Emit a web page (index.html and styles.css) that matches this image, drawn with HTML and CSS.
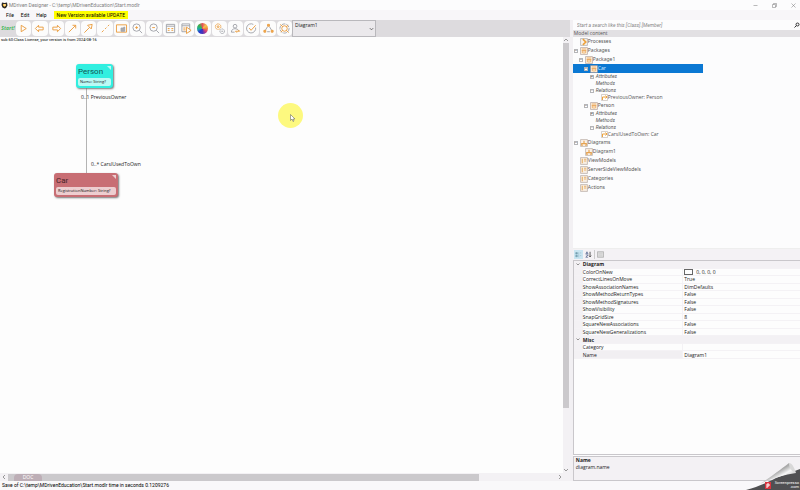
FILE: index.html
```html
<!DOCTYPE html>
<html lang="en">
<head>
<meta charset="utf-8">
<title>MDriven Designer</title>
<link rel="stylesheet" href="styles.css">
</head>
<body>
<svg class="defs" aria-hidden="true">
  <symbol id="class" viewBox="0 0 14 14"><path d="M1 1h12v12H1z" fill="#fff8ed" stroke="#a08a84"/><path d="M3 3.500h8M3 6h8M7 6v6M4 6v5M10 6v5" stroke="#e9a050" stroke-width="1.500" fill="none"/></symbol>
  <symbol id="process" viewBox="0 0 14 14"><path d="M1 1h12v12H1z" fill="#f7f3ef" stroke="#999"/><path d="M5 2l5 5-5 5" stroke="#eda23d" stroke-width="3" fill="none"/></symbol>
  <symbol id="relation" viewBox="0 0 14 14"><path d="M1 1h12v12H1z" fill="#fff" stroke="#b1a49c"/><path d="M3 12V6h8M9 3l3 3-3 3" stroke="#eda23d" stroke-width="2" fill="none"/></symbol>
  <symbol id="diagram" viewBox="0 0 14 14"><path d="M1 1h12v12H1z" fill="#faf2ea" stroke="#a99a92"/><path d="M7 3v5M3 12V8h8v4M2 11h3M9 11h3" stroke="#e5a250" stroke-width="2" fill="none"/></symbol>
  <symbol id="list" viewBox="0 0 14 14"><path d="M1 1h12v12H1z" fill="#f8eee2" stroke="#a59993"/><path d="M4 3v8M7 4h4M7 7h4" stroke="#e8b26c" stroke-width="2" fill="none"/></symbol>
</svg>

<header class="titlebar">
  <svg class="logo" viewBox="0 0 14 14"><path d="M2 1l5 1 5-1 1 6-3 5-3 1-4-2-2-5z" fill="#2d2926"/><path d="M4 4h6v3l-3 3-3-3z" fill="#f0b434"/><path d="M6 5h3v2H6z" fill="#fff"/></svg>
  <span class="title">MDriven Designer - C:\temp\MDrivenEducation\Start.modlr</span>
  <div class="window-buttons">
    <button aria-label="Minimize"><svg viewBox="0 0 10 10"><path d="M1 5h8"/></svg></button>
    <button aria-label="Restore"><svg viewBox="0 0 10 10"><path d="M1 3h6v6H1zM3 3V1h6v6H7"/></svg></button>
    <button aria-label="Close"><svg viewBox="0 0 10 10"><path d="M1 1l8 8M9 1L1 9"/></svg></button>
  </div>
</header>

<nav class="menu">
  <button>File</button><button>Edit</button><button>Help</button><button class="update">New Version available UPDATE</button>
</nav>

<div class="workspace">
  <main class="editor">
    <div class="toolbar">
      <button class="start">Start!</button>
      <div class="tools">
        <button aria-label="Run"><svg viewBox="0 0 24 24"><path d="M7 5l11 7-11 7z"/></svg></button>
        <button aria-label="Back"><svg viewBox="0 0 24 24"><path d="M3 12l7-7v4h10v6H10v4z"/></svg></button>
        <button aria-label="Forward"><svg viewBox="0 0 24 24"><path d="M21 12l-7-7v4H4v6h10v4z"/></svg></button>
        <button aria-label="Association"><svg viewBox="0 0 24 24"><path d="M4 20L19 5M12 5h7v7"/></svg></button>
        <button aria-label="Generalization"><svg viewBox="0 0 24 24"><path d="M3 21L15 9M10 5l10-2-2 10z"/></svg></button>
        <button aria-label="Association class"><svg viewBox="0 0 24 24"><path d="M4 20l4-4M11 13l3-3M17 7l3-3"/></svg></button>
        <button aria-label="Capture"><svg viewBox="0 0 24 24"><path d="M1 4h22v16H1z"/><path class="gray fill" d="M11 11h6v-2h2v9h-8z"/></svg></button>
        <button aria-label="Zoom in"><svg viewBox="0 0 24 24"><circle class="gray" cx="10" cy="10" r="8"/><path class="gray" d="M16 16l6 6"/><path d="M7 10h6M10 7v6"/></svg></button>
        <button aria-label="Zoom out"><svg viewBox="0 0 24 24"><circle class="gray" cx="10" cy="10" r="8"/><path class="gray" d="M16 16l6 6"/><path d="M7 10h6"/></svg></button>
        <button aria-label="Form"><svg viewBox="0 0 24 24"><path class="gray" d="M3 3h18v18H3zM3 7h18"/><path d="M6 12h4M14 12h4M6 16h4M14 16h4"/></svg></button>
        <button aria-label="Run form"><svg viewBox="0 0 24 24"><path class="gray" d="M2 2h17v17H2zM2 6h17"/><path d="M5 11h5M5 15h5"/><path class="play" d="M12 9l10 7-10 7z"/></svg></button>
        <button aria-label="Colors"><i class="wheel"></i></button>
        <button aria-label="Settings"><svg viewBox="0 0 24 24"><circle cx="9" cy="8" r="6" stroke-dasharray="3 1"/><circle cx="9" cy="8" r="2"/><circle class="gray" cx="18" cy="18" r="5" stroke-dasharray="3 1"/><path class="gray" d="M16 18h4"/></svg></button>
        <button aria-label="User"><svg viewBox="0 0 24 24"><circle class="gray" cx="11" cy="7" r="4"/><path class="gray" d="M3 20c0-10 14-9 16-3M3 20h7"/><path d="M12 18h9l-3-3M12 18l3 3"/></svg></button>
        <button aria-label="Validate"><svg viewBox="0 0 24 24"><path class="gray" d="M21 10a10 10 0 1 1-5-7"/><path d="M7 11l4 5L21 5"/></svg></button>
        <button aria-label="Hierarchy"><svg viewBox="0 0 24 24"><path class="gray" d="M10 8l-5 8M14 8l5 8M9 19h6"/><path class="solid" d="M10 3h4v4h-4zM2 16h4v4H2zM18 16h4v4h-4z"/></svg></button>
        <button aria-label="Refresh"><svg viewBox="0 0 24 24"><circle class="gray" cx="12" cy="12" r="10" stroke-dasharray="8 2"/><circle cx="12" cy="12" r="6"/><path d="M3 3l5 5M16 16l5 5M20 5l-4 3M4 20l4-4"/></svg></button>
      </div>
      <div class="picker">
        <select aria-label="Diagram"><option>Diagram1</option></select>
        <svg viewBox="0 0 6 4"><path d="M1 1l2 2 2-2"/></svg>
      </div>
    </div>

    <div class="canvas-row">
      <section class="canvas">
        <p class="license">sub 60:Class License, your version is from 2024-08-16</p>
        <i class="link"></i>
        <article class="node person"><h2>Person</h2><p>Name: String?</p></article>
        <span class="end owner">0..1 PreviousOwner</span>
        <span class="end cars">0..* CarsIUsedToOwn</span>
        <article class="node car"><h2>Car</h2><p>RegistrationNumber: String?</p></article>
        <i class="spot"></i>
        <svg class="cursor" viewBox="0 0 10 16"><path d="M1 1v12l3-3 2 5 2-1-2-4h4z" fill="#fff" stroke="#555"/></svg>
      </section>
      <div class="vscroll">
        <svg viewBox="0 0 6 6"><path d="M1 4l2-2 2 2"/></svg><i></i><svg viewBox="0 0 6 6"><path d="M1 2l2 2 2-2"/></svg>
      </div>
    </div>
    <div class="hscroll">
      <svg viewBox="0 0 6 6"><path d="M4 1L2 3l2 2"/></svg>
      <div class="track"><i></i><button class="doc">DOC</button></div>
      <svg viewBox="0 0 6 6"><path d="M2 1l2 2-2 2"/></svg>
    </div>
  </main>

  <aside class="side">
    <div class="search">
      <input type="text" aria-label="Search model" placeholder="Start a search like this [Class].[Member]">
      <svg viewBox="0 0 12 12"><circle cx="7" cy="5" r="3"/><path d="M5 7l-4 4"/></svg>
    </div>
    <h3 class="side-head">Model content</h3>
    <ul class="tree">
      <li><b></b><svg><use href="#process"/></svg>Processes</li>
      <li><b class="box">−</b><svg><use href="#class"/></svg>Packages</li>
      <li class="l1"><b class="box">−</b><svg><use href="#class"/></svg>Package1</li>
      <li class="l2 selected"><b class="box">−</b><svg><use href="#class"/></svg>Car</li>
      <li class="l3 small"><b class="box">+</b>Attributes</li>
      <li class="l3 small"><b></b>Methods</li>
      <li class="l3 small"><b class="box">−</b>Relations</li>
      <li class="l4 small"><b></b><svg><use href="#relation"/></svg>PreviousOwner: Person</li>
      <li class="l2"><b class="box">−</b><svg><use href="#class"/></svg>Person</li>
      <li class="l3 small"><b class="box">+</b>Attributes</li>
      <li class="l3 small"><b></b>Methods</li>
      <li class="l3 small"><b class="box">−</b>Relations</li>
      <li class="l4 small"><b></b><svg><use href="#relation"/></svg>CarsIUsedToOwn: Car</li>
      <li><b class="box">−</b><svg><use href="#diagram"/></svg>Diagrams</li>
      <li class="l1"><b></b><svg><use href="#diagram"/></svg>Diagram1</li>
      <li><b></b><svg><use href="#list"/></svg>ViewModels</li>
      <li><b></b><svg><use href="#list"/></svg>ServerSideViewModels</li>
      <li><b></b><svg><use href="#list"/></svg>Categories</li>
      <li><b></b><svg><use href="#list"/></svg>Actions</li>
    </ul>
    <div class="prop-tools">
      <button class="on" aria-label="Categorized"><svg viewBox="0 0 18 18"><path d="M2 4h4v4H2zM2 11h4v4H2z" fill="#7fa7b8" stroke="#58899d"/><path d="M8 5h3M8 8h3M8 12h3M8 15h3M13 5h3M13 12h3" stroke="#6795a9"/></svg></button>
      <button aria-label="Alphabetical"><svg viewBox="0 0 18 18"><path d="M2 8l3-6 3 6M3 6h4M2 10h6l-6 6h6" stroke="#5b6c94" stroke-width="2" fill="none"/><path d="M13 2v13M10 12l3 3 3-3" stroke="#333" stroke-width="2" fill="none"/></svg></button>
      <button class="pages" aria-label="Property pages"><svg viewBox="0 0 18 18"><path d="M1 2h16v14H1z" fill="#ddd" stroke="#aaa" stroke-width="2"/><path d="M4 7h10M4 11h10" stroke="#bbb"/></svg></button>
    </div>
    <div class="prop-grid">
      <table>
        <colgroup><col class="c-mark"><col class="c-name"><col></colgroup>
        <tbody>
        <tr class="group"><td><svg viewBox="0 0 8 6"><path d="M1 1l3 3 3-3"/></svg></td><th colspan="2">Diagram</th></tr>
        <tr><td></td><th>ColorOnNew</th><td><span class="swatch"></span>0, 0, 0, 0</td></tr>
        <tr><td></td><th>CorrectLinesOnMove</th><td>True</td></tr>
        <tr><td></td><th>ShowAssociationNames</th><td>DimDefaults</td></tr>
        <tr><td></td><th>ShowMethodReturnTypes</th><td>False</td></tr>
        <tr><td></td><th>ShowMethodSignatures</th><td>False</td></tr>
        <tr><td></td><th>ShowVisibility</th><td>False</td></tr>
        <tr><td></td><th>SnapGridSize</th><td>8</td></tr>
        <tr><td></td><th>SquareNewAssociations</th><td>False</td></tr>
        <tr><td></td><th>SquareNewGeneralizations</th><td>False</td></tr>
        <tr class="group"><td><svg viewBox="0 0 8 6"><path d="M1 1l3 3 3-3"/></svg></td><th colspan="2">Misc</th></tr>
        <tr><td></td><th>Category</th><td></td></tr>
        <tr class="current"><td></td><th>Name</th><td>Diagram1</td></tr>
        </tbody>
      </table>
    </div>
    <div class="prop-help"><strong>Name</strong><span>diagram.name</span></div>
  </aside>
</div>

<footer class="status">Save of C:\temp\MDrivenEducation\Start.modlr time in seconds 0.1209276</footer>
<div class="curl">
  <svg viewBox="0 0 54 30">
    <defs><linearGradient id="fold" x1="0" y1="0" x2="1" y2="1"><stop offset="0" stop-color="#999"/><stop offset=".45" stop-color="#aaa"/><stop offset=".6" stop-color="#f6f6f6"/><stop offset="1" stop-color="#888"/></linearGradient></defs>
    <path d="M0 30c14-4 22-8 30-12l24-9v21z" fill="#505052"/>
    <path d="M14 24C26 16 34 10 43 3c2 2 4 7 7 10-12 2-24 5-36 11z" fill="url(#fold)"/>
    <path d="M43 3c3 0 5 4 7 10-4-1-7-5-7-10z" fill="#d8d8d8"/>
    <path d="M19 22h6v7h-6z" fill="#d9343f"/><path d="M21 28v-4h2v2h-2" stroke="#fff" fill="none"/>
  </svg>
  <span>Screenpresso<br>.com</span>
</div>
</body>
</html>
```
FILE: styles.css
```css
* { box-sizing: border-box; }
html, body { height: 100%; }
body {
  margin: 0;
  display: flex;
  flex-direction: column;
  position: relative;
  overflow: hidden;
  background: #fcfcfd;
  color: #222;
  font: 5px/7px "Open Sans", "Noto Sans", sans-serif;
}
button, input, select { font: inherit; color: inherit; border: 0; padding: 0; margin: 0; background: none; }
h2, h3, p, ul { margin: 0; padding: 0; font-weight: 400; }
svg { display: block; flex: none; fill: none; }
.defs { position: absolute; width: 0; height: 0; }
.titlebar, .menu, .status, .license, .node h2, .tree .l3, .curl { font-family: Roboto, "Open Sans", sans-serif; }

.titlebar { display: flex; align-items: center; height: 10px; padding: 0 1px; color: #808080; }
.logo { width: 7px; height: 7px; margin-right: 1px; }
.window-buttons { margin-left: auto; display: flex; gap: 13px; padding-right: 2px; }
.window-buttons button { width: 6px; }
.window-buttons svg { width: 5px; height: 5px; stroke: #777; }

.menu { display: flex; align-items: center; gap: 7px; height: 10px; padding-left: 6px; background: #f8f6f9; color: #000; }
.menu button { height: 8px; }
.menu .update { background: #ff0; padding: 0 3px; }

.workspace { flex: 1; min-height: 0; display: flex; gap: 3px; background: #f2f0f3; }
.editor { flex: 1; min-width: 0; display: flex; flex-direction: column; }

.toolbar { display: flex; height: 17px; background: #dddbde; }
.start { width: 16px; color: #46b95a; font-weight: 700; font-style: italic; }
.tools { display: flex; gap: 1px; width: 276px; padding: 1px 0; }
.tools button { flex: 1; display: flex; align-items: center; justify-content: center; background: #fcfcfc; border-radius: 4px; }
.tools svg { width: 11px; height: 11px; stroke: #ea9b3c; stroke-width: 2; overflow: visible; }
.tools .gray { stroke: #a0a2a8; }
.tools .fill { fill: #a9abb0; }
.tools .solid { fill: #f0b064; }
.tools .play { fill: #fcfcfc; }
.wheel { width: 11px; height: 11px; border-radius: 50%; background: conic-gradient(#e8505a, #f3c64f 50deg, #f08d42 90deg, #d44080 130deg, #4935b8 180deg, #2836d2 220deg, #20a7a8 260deg, #36b64a 310deg, #e8505a); }
.picker { position: relative; width: 84px; border: 1px solid #b9b8bc; background: #ebe9ec; }
.picker select { appearance: none; display: block; width: 100%; height: 8px; padding-left: 2px; }
.picker svg { position: absolute; right: 1px; top: 6px; width: 5px; height: 4px; stroke: #555; }

.canvas-row { flex: 1; min-height: 0; display: flex; }
.canvas { flex: 1; position: relative; overflow: hidden; background: #fdfdfd; }
.license { padding-left: 1px; font-size: 4px; line-height: 6px; color: #000; }
.node { position: absolute; padding: 2px; border-radius: 3px; box-shadow: 1px 1px 2px #777; }
.node::after { content: ""; position: absolute; top: 2px; right: 2px; border: 2px solid transparent; border-top-color: #ffffffaa; border-right-color: #ffffffaa; }
.node h2 { font-size: 8px; line-height: 12px; }
.node p { padding: 0 2px; border-radius: 2px; font-size: 4px; line-height: 8px; white-space: nowrap; background: #ffffffaa; color: #111; }
.person { left: 76px; top: 27px; width: 37px; background: #31efe0; color: #145653; }
.car { left: 54px; top: 136px; width: 64px; background: #c86e74; color: #442329; }
.link { position: absolute; left: 86px; top: 50px; width: 1px; height: 88px; background: #b4b4b4; }
.end { position: absolute; white-space: nowrap; }
.owner { left: 81px; top: 57px; }
.cars { left: 91px; top: 124px; }
.spot { position: absolute; left: 278px; top: 66px; width: 25px; height: 25px; border-radius: 50%; background: #fdf97f; }
.cursor { position: absolute; left: 290px; top: 77px; width: 5px; height: 8px; }

.vscroll { width: 7px; display: flex; flex-direction: column; align-items: center; background: #f3f1f4; }
.vscroll i { flex: 0 1 365px; width: 6px; background: #cbc9cc; }
.vscroll svg:last-child { margin-top: auto; }
.vscroll svg, .hscroll svg { width: 6px; height: 6px; stroke: #999; }
.hscroll { height: 8px; display: flex; align-items: center; gap: 1px; padding: 0 7px 0 1px; background: #f3f1f4; }
.track { flex: 1; height: 7px; position: relative; }
.track i { display: block; width: 86%; height: 100%; background: #cbc9cc; }
.doc { position: absolute; left: 6px; top: 0; width: 28px; height: 7px; border-radius: 4px 4px 0 0; background: #bdaeb6; color: #fff; }

.side { width: 28.4%; display: flex; flex-direction: column; background: #fcfcfd; }
.search { display: flex; align-items: center; height: 10px; padding-left: 4px; }
.search input { flex: 1; min-width: 0; height: 8px; font-family: Roboto, sans-serif; font-style: italic; outline: 0; }
.search input::placeholder { color: #888; opacity: 1; }
.search svg { width: 6px; height: 6px; stroke: #333; stroke-width: 2; }
.side-head { padding-left: 1px; font-size: 5px; line-height: 7px; background: #e2e0e3; color: #555; }
.tree { flex: 1; min-height: 0; list-style: none; color: #555; font-family: "Noto Sans", "Open Sans", sans-serif; }
.tree li { display: flex; align-items: center; height: 9px; padding-left: 1px; }
.tree svg { width: 8px; height: 8px; }
.tree b { width: 4px; height: 4px; margin-right: 2px; flex: none; }
.tree .box { border: 1px solid #b5b5b8; font-size: 4px; line-height: 2px; text-align: center; color: #555; background: #fff; }
.tree .l1 { padding-left: 6px; }
.tree .l2 { padding-left: 11px; }
.tree .l3 { padding-left: 17px; font-style: italic; }
.tree .l4 { padding-left: 22px; font-family: "Open Sans", sans-serif; }
.tree .small { height: 7px; }
.tree .small svg { width: 7px; height: 7px; }
.tree .selected { width: 130px; background: #0b78d3; color: #d8ecff; }

.prop-tools { display: flex; align-items: center; gap: 1px; height: 12px; padding: 0 1px; background: #f4f2f5; border-top: 1px solid #eee; }
.prop-tools button { padding: 1px; }
.prop-tools svg { width: 7px; height: 7px; }
.prop-tools .on { background: #c9e5f1; }
.prop-tools .pages { padding-left: 2px; border-left: 1px solid #ccc; }
.prop-grid { height: 195px; border: 1px solid #c9c7cb; border-right: 0; background: #fdfdfd; }
.prop-grid table { width: 100%; height: 98px; border-collapse: collapse; table-layout: fixed; }
.prop-grid td, .prop-grid th { padding: 0; font-weight: 400; text-align: left; line-height: 6px; border-bottom: 1px solid #f4f2f5; white-space: nowrap; }
.c-mark { width: 9px; }
.c-name { width: 100px; }
.prop-grid td:first-child { background: #f3f1f4; }
.prop-grid td:last-child { padding-left: 1px; border-left: 1px solid #f4f2f5; }
.prop-grid .group th { font-weight: 700; background: #f3f1f4; }
.prop-grid .current th { background: #f1eff2; }
.prop-grid svg { width: 4px; height: 3px; margin-left: 2px; stroke: #333; }
.swatch { display: inline-block; width: 9px; height: 6px; margin-right: 3px; border: 1px solid #666; vertical-align: top; }
.prop-help { display: flex; flex-direction: column; height: 25px; margin-top: 1px; padding: 0 2px; border: 1px solid #c9c7cb; border-right: 0; background: #f3f1f4; }

.status { height: 9px; padding-left: 2px; line-height: 9px; background: #f9f8fa; color: #000; }
.curl { position: absolute; right: 0; bottom: 0; width: 54px; height: 30px; }
.curl svg { width: 54px; height: 30px; }
.curl span { position: absolute; right: 1px; bottom: 1px; color: #fff; font-size: 4px; line-height: 4px; text-align: right; }
```
